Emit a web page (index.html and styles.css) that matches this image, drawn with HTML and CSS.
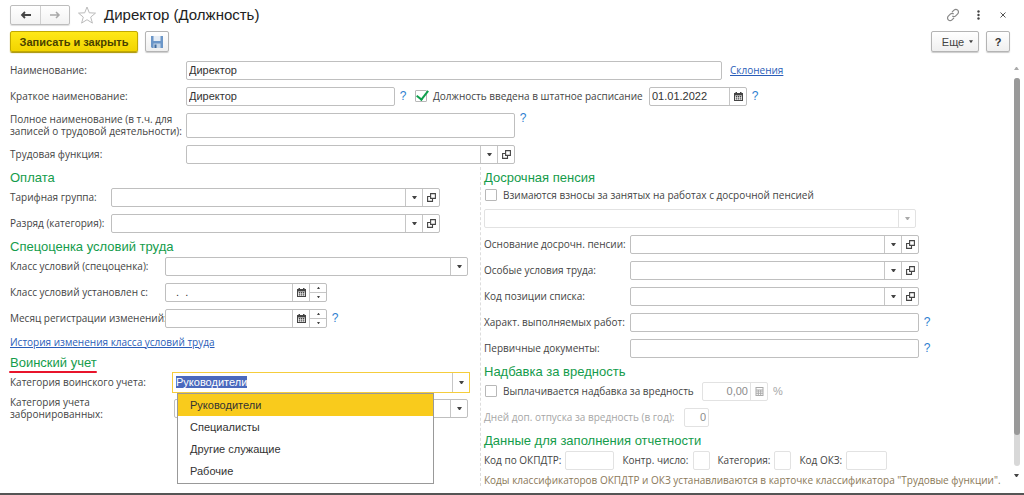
FILE: index.html
```
<!DOCTYPE html>
<html lang="ru">
<head>
<meta charset="utf-8">
<title>Директор (Должность)</title>
<link rel="stylesheet" href="styles.css">
</head>
<body>
<svg class="defs" aria-hidden="true">
  <symbol id="i-down" viewBox="0 0 5 3"><path d="M0 0h5L3 3H2z"/></symbol>
  <symbol id="i-up" viewBox="0 0 5 3"><path d="M0 3h5L3 0H2z"/></symbol>
  <symbol id="i-open" viewBox="0 0 9 9"><path d="M3.600.6h4.800v4.800H3.600zM3 3.500H.6v4.900h4.900V6" fill="none" stroke="currentColor" stroke-width="1.100"/></symbol>
  <symbol id="i-cal" viewBox="0 0 9 9"><path fill-rule="evenodd" d="M0 1h1.500V0h1.500v1h3V0h1.500v1H9v8H0zM1 3.500v4.500h7V3.500z"/><path d="M1.700 4h1.500v1.400H1.700zM3.800 4h1.500v1.400H3.800zM5.900 4h1.500v1.400H5.900zM1.700 6.200h1.500v1.300H1.700zM3.800 6.200h1.500v1.300H3.800zM5.900 6.200h1.500v1.300H5.900z"/></symbol>
  <symbol id="i-calc" viewBox="0 0 9 9"><path fill-rule="evenodd" d="M.5 0h8v9h-8zM1.500 1v1.500h6V1zM1.500 3.500v1h1.300v-1zM3.800 3.500v1h1.400v-1zM6.200 3.500v1h1.300v-1zM1.500 5.300v1h1.300v-1zM3.800 5.300v1h1.400v-1zM6.200 5.300v1h1.300v-1zM1.500 7.100v1h1.300v-1zM3.800 7.100v1h1.400v-1zM6.200 7.100v1h1.300v-1z"/></symbol>
</svg>
<div class="window">
  <header class="titlebar">
    <div class="nav">
      <button type="button" aria-label="Назад"><svg width="12" height="8" viewBox="0 0 12 8"><path d="M11 4H2M5 1L2 4l3 3" fill="none" stroke="#444" stroke-width="1.800"/></svg></button>
      <button type="button" aria-label="Вперед"><svg width="12" height="8" viewBox="0 0 12 8"><path d="M1 4h9M7 1l3 3-3 3" fill="none" stroke="#a8a8a8" stroke-width="1.500"/></svg></button>
    </div>
    <button type="button" class="plain star" aria-label="В избранное"><svg width="20" height="18" viewBox="0 0 20 18"><path d="M10 1l2.300 5.800 6.200.3-4.800 4 1.700 6L10 13.700 4.600 17.100l1.700-6-4.800-4 6.200-.3z" fill="#fff" stroke="#bbb"/></svg></button>
    <h1>Директор (Должность)</h1>
    <div class="tools">
      <button type="button" class="plain" aria-label="Ссылка"><svg width="14" height="14" viewBox="0 0 14 14"><path fill="none" stroke="#888" stroke-width="1.200" d="M6 4.200l2-2a2.600 2.600 0 0 1 3.700 3.700l-2 2a2.600 2.600 0 0 1-3.400.2M8 9.800l-2 2a2.600 2.600 0 0 1-3.700-3.700l2-2a2.600 2.600 0 0 1 3.400-.2"/></svg></button>
      <button type="button" class="plain" aria-label="Меню"><svg width="3" height="10" viewBox="0 0 3 10"><circle cx="1.500" cy="1.500" r="1.200"/><circle cx="1.500" cy="5" r="1.200"/><circle cx="1.500" cy="8.500" r="1.200"/></svg></button>
      <button type="button" class="plain" aria-label="Закрыть"><svg width="6" height="6" viewBox="0 0 6 6"><path d="M.5.5l5 5M5.500.5l-5 5" stroke="#555"/></svg></button>
    </div>
  </header>

  <div class="toolbar">
    <button type="button" class="btn primary">Записать и закрыть</button>
    <button type="button" class="btn square" aria-label="Записать"><svg width="12" height="12" viewBox="0 0 12 12"><path d="M0 0h12v12H1l-1-1z" fill="#6b96c8"/><path d="M2.500 0h7v5h-7z" fill="#e6edf5"/><path d="M2.500 7.500h7V12h-7z" fill="#c4d4e6"/><path d="M3.500 8.500h2V12h-2z" fill="#416c9f"/></svg></button>
    <span class="grow"></span>
    <button type="button" class="btn more">Еще <svg class="tri"><use href="#i-down"/></svg></button>
    <button type="button" class="btn square ask">?</button>
  </div>

  <div class="body">
    <form class="form">
      <div class="row">
        <label class="lbl-top" for="name">Наименование:</label>
        <span class="field w-name"><input id="name" value="Директор"></span>
        <a class="decl" href="#">Склонения</a>
      </div>
      <div class="row">
        <label class="lbl-top" for="short">Краткое наименование:</label>
        <span class="field w-short"><input id="short" value="Директор"></span>
        <button type="button" class="help">?</button>
        <label class="check staff"><input type="checkbox" checked>Должность введена в штатное расписание</label>
        <span class="field w-date"><input aria-label="Дата" value="01.01.2022"><button type="button" aria-label="Календарь"><svg class="ico"><use href="#i-cal"/></svg></button></span>
        <button type="button" class="help">?</button>
      </div>
      <div class="row tall">
        <label class="lbl-top" for="full">Полное наименование (в т.ч. для<br>записей о трудовой деятельности):</label>
        <span class="field area w-func"><textarea id="full"></textarea></span>
        <button type="button" class="help top">?</button>
      </div>
      <div class="row">
        <label class="lbl-top" for="func">Трудовая функция:</label>
        <span class="field w-func"><input id="func"><button type="button" aria-label="Выбрать"><svg class="tri"><use href="#i-down"/></svg></button><button type="button" aria-label="Открыть"><svg class="ico"><use href="#i-open"/></svg></button></span>
      </div>

      <div class="columns">
        <div class="left">
          <h2>Оплата</h2>
          <div class="row">
            <label class="lbl-pay" for="tariff">Тарифная группа:</label>
            <span class="field w-func"><input id="tariff"><button type="button" aria-label="Выбрать"><svg class="tri"><use href="#i-down"/></svg></button><button type="button" aria-label="Открыть"><svg class="ico"><use href="#i-open"/></svg></button></span>
          </div>
          <div class="row">
            <label class="lbl-pay" for="grade">Разряд (категория):</label>
            <span class="field w-func"><input id="grade"><button type="button" aria-label="Выбрать"><svg class="tri"><use href="#i-down"/></svg></button><button type="button" aria-label="Открыть"><svg class="ico"><use href="#i-open"/></svg></button></span>
          </div>
          <h2>Спецоценка условий труда</h2>
          <div class="row">
            <label class="lbl-cond" for="cls">Класс условий (спецоценка):</label>
            <span class="field w-cls"><input id="cls"><button type="button" aria-label="Выбрать"><svg class="tri"><use href="#i-down"/></svg></button></span>
          </div>
          <div class="row">
            <label class="lbl-cond" for="since">Класс условий установлен с:</label>
            <span class="field w-since"><input id="since" value="  .  ."><button type="button" aria-label="Календарь"><svg class="ico"><use href="#i-cal"/></svg></button><span class="spin"><button type="button" aria-label="Больше"><svg class="tri"><use href="#i-up"/></svg></button><button type="button" aria-label="Меньше"><svg class="tri"><use href="#i-down"/></svg></button></span></span>
          </div>
          <div class="row">
            <label class="lbl-cond" for="month">Месяц регистрации изменений:</label>
            <span class="field w-since"><input id="month"><button type="button" aria-label="Календарь"><svg class="ico"><use href="#i-cal"/></svg></button><span class="spin"><button type="button" aria-label="Больше"><svg class="tri"><use href="#i-up"/></svg></button><button type="button" aria-label="Меньше"><svg class="tri"><use href="#i-down"/></svg></button></span></span>
            <button type="button" class="help">?</button>
          </div>
          <div class="row short"><a href="#">История изменения класса условий труда</a></div>
          <h2><span class="marked">Воинский учет</span></h2>
          <div class="row">
            <label class="lbl-mil" for="mil">Категория воинского учета:</label>
            <span class="field active"><input id="mil" role="combobox" aria-expanded="true" aria-controls="mil-list" value="Руководители"><button type="button" aria-label="Выбрать"><svg class="tri"><use href="#i-down"/></svg></button>
              <ul class="menu" id="mil-list" role="listbox">
                <li role="option" aria-selected="true">Руководители</li>
                <li role="option">Специалисты</li>
                <li role="option">Другие служащие</li>
                <li role="option">Рабочие</li>
              </ul>
            </span>
          </div>
          <div class="row">
            <label class="lbl-mil" for="booked">Категория учета<br>забронированных:</label>
            <span class="field w-booked"><input id="booked"><button type="button" aria-label="Выбрать"><svg class="tri"><use href="#i-down"/></svg></button></span>
          </div>
        </div>

        <div class="right">
          <h2>Досрочная пенсия</h2>
          <div class="row short"><label class="check"><input type="checkbox">Взимаются взносы за занятых на работах с досрочной пенсией</label></div>
          <div class="row">
            <span class="field off w-kind"><input aria-label="Вид взносов" disabled><button type="button" aria-label="Выбрать" disabled><svg class="tri"><use href="#i-down"/></svg></button></span>
          </div>
          <div class="row">
            <label class="lbl-pens" for="basis">Основание досрочн. пенсии:</label>
            <span class="field w-pens"><input id="basis"><button type="button" aria-label="Выбрать"><svg class="tri"><use href="#i-down"/></svg></button><button type="button" aria-label="Открыть"><svg class="ico"><use href="#i-open"/></svg></button></span>
          </div>
          <div class="row">
            <label class="lbl-pens" for="special">Особые условия труда:</label>
            <span class="field w-pens"><input id="special"><button type="button" aria-label="Выбрать"><svg class="tri"><use href="#i-down"/></svg></button><button type="button" aria-label="Открыть"><svg class="ico"><use href="#i-open"/></svg></button></span>
          </div>
          <div class="row">
            <label class="lbl-pens" for="pos">Код позиции списка:</label>
            <span class="field w-pens"><input id="pos"><button type="button" aria-label="Выбрать"><svg class="tri"><use href="#i-down"/></svg></button><button type="button" aria-label="Открыть"><svg class="ico"><use href="#i-open"/></svg></button></span>
          </div>
          <div class="row">
            <label class="lbl-pens" for="works">Характ. выполняемых работ:</label>
            <span class="field w-pens"><input id="works"></span>
            <button type="button" class="help">?</button>
          </div>
          <div class="row">
            <label class="lbl-pens" for="docs">Первичные документы:</label>
            <span class="field w-pens"><input id="docs"></span>
            <button type="button" class="help">?</button>
          </div>
          <h2>Надбавка за вредность</h2>
          <div class="row">
            <label class="check harm"><input type="checkbox">Выплачивается надбавка за вредность</label>
            <span class="field off num w-pct"><input aria-label="Процент надбавки" value="0,00" disabled><button type="button" aria-label="Калькулятор" disabled><svg class="ico"><use href="#i-calc"/></svg></button></span>
            <span class="muted pct">%</span>
          </div>
          <div class="row">
            <label class="muted lbl-days" for="days">Дней доп. отпуска за вредность (в год):</label>
            <span class="field off num w-days"><input id="days" value="0" disabled></span>
          </div>
          <h2>Данные для заполнения отчетности</h2>
          <div class="row codes">
            <label for="okp">Код по ОКПДТР:</label><span class="field off w-okp"><input id="okp" disabled></span>
            <label for="ctl">Контр. число:</label><span class="field off w-digit"><input id="ctl" disabled></span>
            <label for="cat">Категория:</label><span class="field off w-digit"><input id="cat" disabled></span>
            <label for="okz">Код ОКЗ:</label><span class="field off w-okz"><input id="okz" disabled></span>
          </div>
          <p class="note">Коды классификаторов ОКПДТР и ОКЗ устанавливаются в карточке классификатора "Трудовые функции".</p>
        </div>
      </div>
    </form>
    <div class="scroll" aria-hidden="true">
      <svg class="tri faint"><use href="#i-up"/></svg>
      <div class="track"><div class="thumb"></div></div>
      <svg class="tri"><use href="#i-down"/></svg>
    </div>
  </div>
  <div class="edge"></div>
</div>
<script src="script.js"></script>
</body>
</html>
```
FILE: styles.css
```
* { box-sizing: border-box; }

body {
  margin: 0;
  background: #fff;
  color: #444;
  font: 11px/12px "Liberation Sans", Arial, sans-serif;
}

button, input, textarea { font: inherit; color: inherit; }
button { padding: 0; }
svg { fill: currentColor; flex: none; }
.defs { display: none; }
.tri { width: 5px; height: 3px; }
.ico { width: 9px; height: 9px; }
.grow { flex: 1; }

.window {
  display: flex;
  flex-direction: column;
  height: 100vh;
  overflow: hidden;
}

.titlebar {
  display: flex;
  align-items: center;
  padding: 5px 18px 0 10px;
}

.nav {
  display: flex;
  height: 20px;
  border: 1px solid #bdbdbd;
  border-radius: 2px;
  background: linear-gradient(#fff, #f2f2f2);
  box-shadow: 0 1px 1px #ddd;
}
.nav button {
  display: flex;
  align-items: center;
  justify-content: center;
  width: 29px;
  border: 0;
  background: none;
}
.nav button + button { border-left: 1px solid #d0d0d0; }

.plain {
  display: flex;
  border: 0;
  background: none;
}
.star { margin-left: 7px; }

h1 {
  flex: 1;
  margin: 0 0 0 7px;
  color: #222;
  font-size: 15px;
  font-weight: normal;
  line-height: 20px;
}

.tools {
  display: flex;
  align-items: center;
  gap: 20px;
}
.tools .plain:nth-child(2) { margin-left: -3px; }

.toolbar {
  display: flex;
  gap: 7px;
  padding: 6px 14px 5px 10px;
}
.btn {
  display: flex;
  align-items: center;
  justify-content: center;
  height: 21px;
  border: 1px solid #b4b4b4;
  border-radius: 2px;
  background: linear-gradient(#fff, #efefef);
  box-shadow: 0 1px 1px #ccc;
}
.primary {
  width: 128px;
  border-color: #c2a900;
  background: linear-gradient(#ffe818, #f2d400);
  box-shadow: 0 1px 1px #a89200;
  color: #494100;
  font-weight: bold;
}
.square { width: 24px; }
.more {
  gap: 5px;
  width: 48px;
  padding-left: 5px;
}
.more .tri { width: 4px; }
.ask { color: #333; font-weight: bold; }

.body {
  display: flex;
  flex: 1;
  min-height: 0;
}
.form {
  display: flex;
  flex: 1;
  flex-direction: column;
  min-width: 0;
  margin-bottom: 5px;
  padding-left: 10px;
  overflow: hidden;
}

.row {
  display: flex;
  flex: none;
  align-items: center;
  min-height: 26px;
}
.row.tall { min-height: 32px; }
.row.short { min-height: 21px; }

label, a, .note {
  font-family: "Open Sans", "Noto Sans", sans-serif;
  font-size: 10px;
}
label { flex: none; white-space: nowrap; }
.lbl-top { width: 176px; }
.lbl-pay { width: 101px; }
.lbl-cond { width: 155px; }
.lbl-mil { width: 162px; }
.lbl-pens { width: 146px; }
.lbl-days { width: 200px; }
.muted { color: #a6a6a6; }

.field {
  display: flex;
  flex: 0 1 auto;
  height: 19px;
  border: 1px solid #bfbfbf;
  border-radius: 2px;
  background: #fff;
}
.field input, .field textarea {
  flex: 1;
  width: 100%;
  min-width: 0;
  padding: 0 2px;
  border: 0;
  outline: 0;
  background: none;
  color: #333;
  resize: none;
}
.field > button {
  display: flex;
  flex: none;
  align-items: center;
  justify-content: center;
  width: 17px;
  border: 0;
  border-left: 1px solid #c6c6c6;
  background: none;
}
.field.area { height: 25px; }
.field.off { border-color: #e2e2e2; }
.field.off input { color: #8c8c8c; }
.field.off button { border-color: #e2e2e2; color: #aaa; }
.num input { text-align: right; }

.spin {
  display: flex;
  flex: none;
  flex-direction: column;
  width: 17px;
  border-left: 1px solid #c6c6c6;
}
.spin button {
  display: flex;
  flex: 1;
  align-items: center;
  justify-content: center;
  border: 0;
  background: none;
}
.spin button + button { border-top: 1px solid #c6c6c6; }
.spin .tri { width: 3px; height: 2px; }

#since { white-space: pre; padding-left: 4px; }
.w-name { width: 536px; }
.w-short { width: 209px; }
.w-date { width: 98px; }
.w-func { width: 329px; }
.w-cls { width: 303px; }
.w-since { width: 162px; }
.w-booked { width: 294px; margin-left: 2px; }
.w-kind { width: 432px; }
.w-pens { width: 289px; }
.w-pct { width: 66px; }
.w-days { width: 25px; }
.w-okp { width: 49px; }
.w-digit { width: 17px; }
.w-okz { width: 41px; }

a { color: #2a5db8; }
.decl { margin-left: 8px; }
.help {
  width: 16px;
  border: 0;
  background: none;
  color: #2f7fd0;
  font-size: 12px;
}
.help.top { align-self: flex-start; padding-top: 3px; }

.check {
  display: flex;
  align-items: center;
  gap: 5px;
}
.check input {
  display: grid;
  flex: none;
  place-items: center;
  width: 12px;
  height: 12px;
  margin: 0 1px;
  border: 1px solid #b8b8b8;
  border-radius: 1px;
  background: #fff;
  appearance: none;
}
.check input:checked::after {
  content: "";
  width: 5px;
  height: 10px;
  margin: -4px 0 0 2px;
  border: solid #0fa04e;
  border-width: 0 2px 2px 0;
  transform: rotate(38deg);
}
.staff { width: 235px; margin-left: 3px; }
.harm { width: 218px; }
.pct { margin-left: 5px; }

.columns {
  display: grid;
  grid-template-columns: 470px 1fr;
}
.left { min-width: 0; }
.right {
  min-width: 0;
  padding-left: 3px;
  border-left: 1px dashed #ddd;
}

h2 {
  margin: 0;
  padding-top: 4px;
  color: #149c4b;
  font-size: 13px;
  font-weight: normal;
  line-height: 13px;
}
.marked { position: relative; }
.marked::after {
  content: "";
  position: absolute;
  right: 0;
  bottom: -3px;
  left: -1px;
  height: 2px;
  border-radius: 1px;
  background: #e8142b;
}

.field.active {
  position: relative;
  width: 298px;
  height: 21px;
  border: 1px solid #f5cd3c;
  border-radius: 0;
}
.active input { padding: 0 3px; }
.active input::selection { background: #4a69bd; color: #fff; }
.menu {
  position: absolute;
  z-index: 2;
  top: 20px;
  left: 4px;
  width: 257px;
  margin: 0;
  padding: 0 0 1px;
  border: 1px solid #999;
  background: #fff;
  color: #333;
  list-style: none;
}
.menu li {
  padding: 0 12px;
  line-height: 22px;
}
.menu li[aria-selected="true"] { background: #f9cb1c; }

.codes { gap: 4px; }
.codes .field + label { margin-left: 4px; }
.note {
  margin: 1px 0 0;
  color: #8a7858;
  white-space: nowrap;
}

.scroll {
  display: flex;
  flex: none;
  flex-direction: column;
  align-items: center;
  gap: 8px;
  width: 12px;
  padding: 10px 3px 16px 0;
}
.faint { color: #aaa; }
.track {
  flex: 1;
  width: 6px;
  border-radius: 3px;
  background: #d8d8d8;
}
.thumb {
  height: 92%;
  border-radius: 3px;
  background: #999;
}
.edge { flex: none; height: 2px; background: #555; }
```
FILE: script.js
```
const active = document.getElementById("mil");
active.focus({ preventScroll: true });
active.select();
```
